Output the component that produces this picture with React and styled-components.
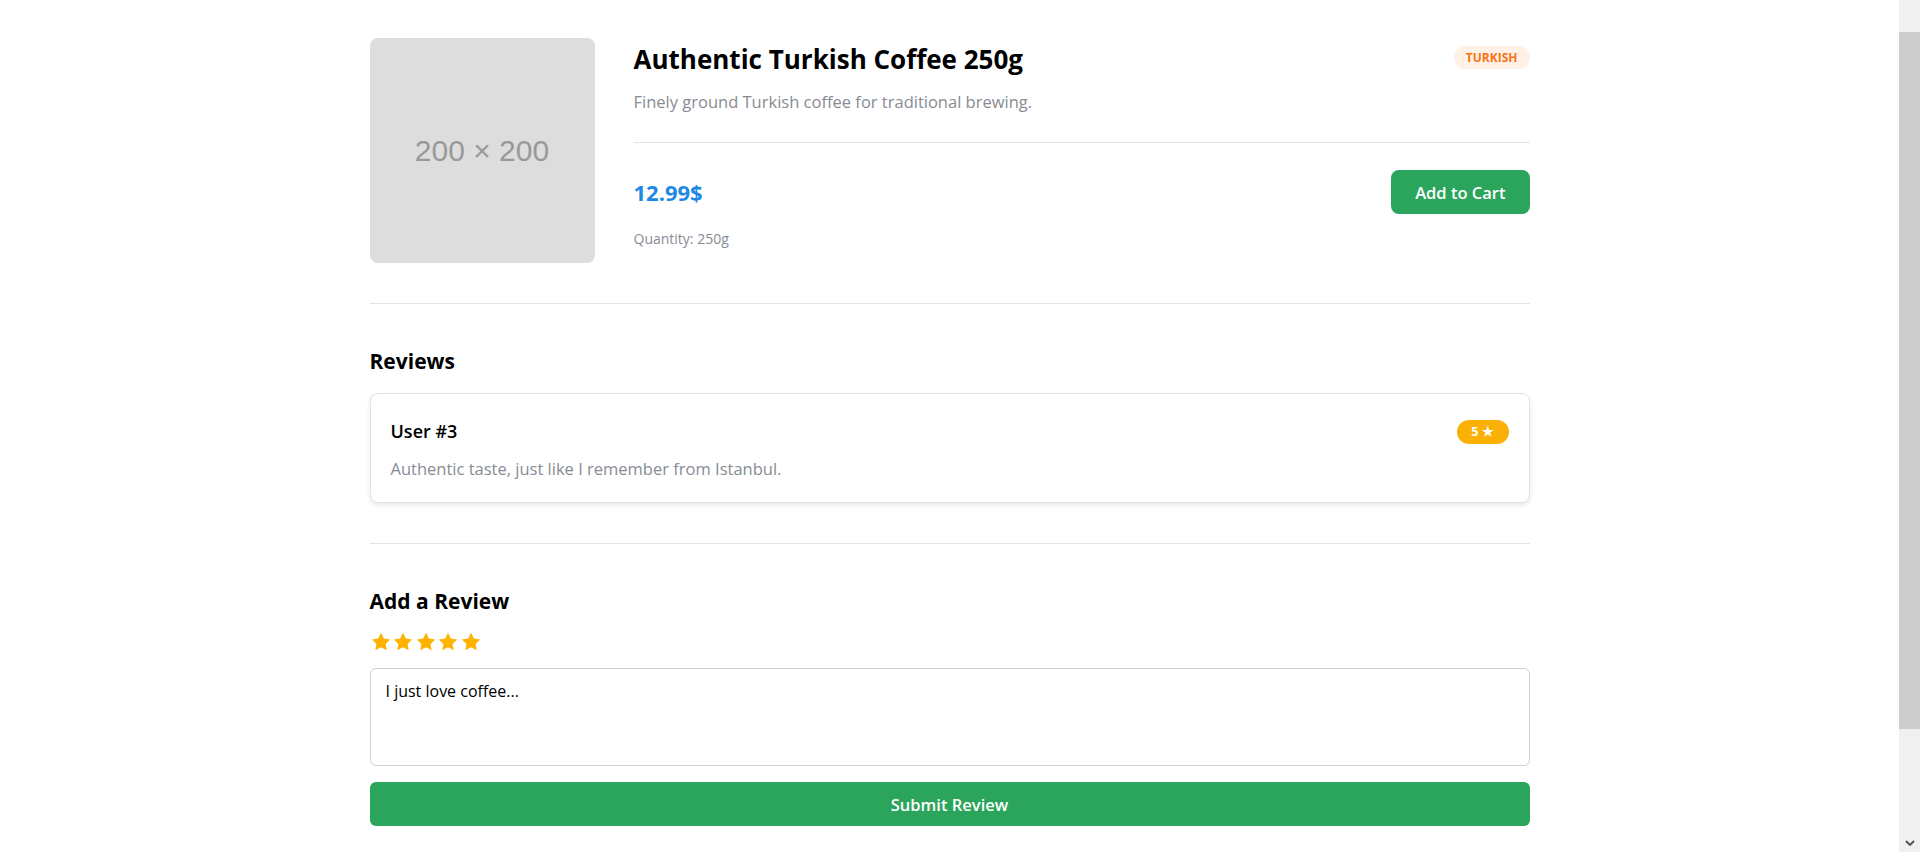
import React, { useState } from 'react';
import styled, { createGlobalStyle } from 'styled-components';

const GlobalStyle = createGlobalStyle`
  html, body {
    margin: 0;
    padding: 0;
    background: #fff;
  }
  body {
    font-family: "Open Sans", "Noto Sans", Arial, sans-serif;
    color: #111;
  }
  * {
    box-sizing: border-box;
  }
`;

const Shell = styled.div`
  display: flex;
  align-items: flex-start;
`;

const Main = styled.main`
  flex: 1;
  min-width: 0;
`;

// window scrollbar as it shows in the screenshot
const ScrollGutter = styled.aside`
  flex: 0 0 21px;
  height: 852px;
  background: #f0f0f0;
  display: flex;
  flex-direction: column;
  align-items: stretch;
  padding-top: 32px;
`;

const ScrollThumb = styled.div`
  height: 697px;
  background: #cdcdcd;
`;

const ScrollArrow = styled.div`
  flex: 1;
  display: flex;
  align-items: flex-end;
  justify-content: center;
  padding-bottom: 6px;
  color: #505050;
`;

const Page = styled.div`
  max-width: 1160px;
  margin: 0 auto;
  padding: 38px 0 137px;
`;

const ProductSection = styled.section`
  display: flex;
  gap: 39px;
`;

const ImagePlaceholder = styled.div`
  flex: 0 0 225px;
  height: 225px;
  border-radius: 8px;
  background: #dddddd;
  color: #999999;
  display: flex;
  align-items: center;
  justify-content: center;
  font-family: "Liberation Sans", Arial, sans-serif;
  font-size: 30px;
`;

const ProductInfo = styled.div`
  flex: 1;
  display: flex;
  flex-direction: column;
`;

const TitleRow = styled.div`
  display: flex;
  justify-content: space-between;
  align-items: flex-start;
`;

const Title = styled.h1`
  margin: 0;
  font-size: 26px;
  line-height: 42px;
  font-weight: 700;
  color: #000;
`;

const OriginBadge = styled.span`
  margin-top: 8px;
  padding: 0 12px;
  height: 23px;
  line-height: 23px;
  border-radius: 12px;
  background: #fff1e6;
  color: #f97316;
  font-size: 12px;
  font-weight: 700;
  text-transform: uppercase;
`;

const Description = styled.p`
  margin: 10px 0 0;
  font-size: 16.5px;
  line-height: 24px;
  color: #878c94;
`;

const Divider = styled.hr`
  border: none;
  border-top: 1px solid ${(p) => p.$color || '#e4e4e4'};
  margin: ${(p) => p.$margin || '40px 0 44px'};
`;

const PriceRow = styled.div`
  display: flex;
  justify-content: space-between;
  align-items: center;
`;

const Price = styled.span`
  font-size: 22px;
  font-weight: 700;
  color: #1e88e5;
`;

const GreenButton = styled.button`
  border: none;
  border-radius: ${(p) => (p.$block ? '6px' : '8px')};
  background: #2ba55c;
  color: #fff;
  font-family: inherit;
  font-size: 16.5px;
  font-weight: 600;
  height: 44px;
  padding: 0 24px;
  cursor: pointer;
  width: ${(p) => (p.$block ? '100%' : 'auto')};
  display: block;
  margin-top: ${(p) => p.$mt || 0};
`;

const Quantity = styled.span`
  margin-top: 15px;
  font-size: 14px;
  line-height: 20px;
  color: #878c94;
`;

const SectionTitle = styled.h2`
  margin: 0 0 ${(p) => p.$mb || '18px'};
  font-size: 21px;
  line-height: 27px;
  font-weight: 700;
  color: #000;
`;

const ReviewCard = styled.div`
  border: 1px solid #e2e2e6;
  border-radius: 8px;
  padding: 24px 20px 21px;
  box-shadow: 0 2px 4px rgba(0, 0, 0, 0.1);
`;

const ReviewHeader = styled.div`
  display: flex;
  justify-content: space-between;
  align-items: center;
  margin-bottom: 12px;
`;

const ReviewerName = styled.span`
  font-size: 18px;
  line-height: 27px;
  font-weight: 600;
  color: #000;
`;

const RatingBadge = styled.span`
  display: inline-flex;
  align-items: center;
  justify-content: center;
  width: 52px;
  height: 24px;
  border-radius: 12px;
  background: #fab005;
  color: #fff;
  font-size: 12.5px;
  font-weight: 700;
`;

const ReviewText = styled.p`
  margin: 0;
  font-size: 16.5px;
  line-height: 24px;
  color: #878c94;
`;

const StarRow = styled.div`
  display: flex;
  margin-bottom: 15px;
`;

const StarButton = styled.button`
  border: none;
  background: none;
  padding: 0;
  width: 22.5px;
  height: 22px;
  cursor: pointer;
  color: ${(p) => (p.$active ? '#ffb300' : '#d0d0d0')};
  svg {
    display: block;
  }
`;

const ReviewInput = styled.textarea`
  display: block;
  width: 100%;
  height: 98px;
  resize: none;
  border: 1px solid #cfcfd4;
  border-radius: 6px;
  padding: 10px 15px;
  font-family: inherit;
  font-size: 16px;
  line-height: 24px;
  color: #000;
  outline: none;
`;

const Star = () => (
  <svg width="22" height="22" viewBox="0 0 24 24" fill="currentColor">
    <path d="M12 2l3.09 6.26L22 9.27l-5 4.87 1.18 6.88L12 17.77l-6.18 3.25L7 14.14 2 9.27l6.91-1.01L12 2z" />
  </svg>
);

const product = {
  title: 'Authentic Turkish Coffee 250g',
  origin: 'Turkish',
  description: 'Finely ground Turkish coffee for traditional brewing.',
  price: '12.99$',
  quantity: '250g',
};

const reviews = [
  { id: 3, user: 'User #3', rating: 5, text: 'Authentic taste, just like I remember from Istanbul.' },
];

const App = () => {
  const [rating, setRating] = useState(5);
  const [text, setText] = useState('I just love coffee...');

  return (
    <>
      <GlobalStyle />
      <Shell>
        <Main>
          <Page>
            <ProductSection>
              <ImagePlaceholder>200 × 200</ImagePlaceholder>
              <ProductInfo>
                <TitleRow>
                  <Title>{product.title}</Title>
                  <OriginBadge>{product.origin}</OriginBadge>
                </TitleRow>
                <Description>{product.description}</Description>
                <Divider $margin="28px 0 27px" $color="#e2e4ea" />
                <PriceRow>
                  <Price>{product.price}</Price>
                  <GreenButton>Add to Cart</GreenButton>
                </PriceRow>
                <Quantity>Quantity: {product.quantity}</Quantity>
              </ProductInfo>
            </ProductSection>

            <Divider />

            <SectionTitle>Reviews</SectionTitle>
            {reviews.map((r) => (
              <ReviewCard key={r.id}>
                <ReviewHeader>
                  <ReviewerName>{r.user}</ReviewerName>
                  <RatingBadge>{r.rating} ★</RatingBadge>
                </ReviewHeader>
                <ReviewText>{r.text}</ReviewText>
              </ReviewCard>
            ))}

            <Divider />

            <SectionTitle $mb="16px">Add a Review</SectionTitle>
            <StarRow>
              {[1, 2, 3, 4, 5].map((n) => (
                <StarButton key={n} $active={n <= rating} onClick={() => setRating(n)}>
                  <Star />
                </StarButton>
              ))}
            </StarRow>
            <ReviewInput value={text} onChange={(e) => setText(e.target.value)} />
            <GreenButton $block $mt="16px">Submit Review</GreenButton>
          </Page>
        </Main>
        <ScrollGutter>
          <ScrollThumb />
          <ScrollArrow>
            <svg width="10" height="6" viewBox="0 0 10 6" fill="none">
              <path d="M1 1l4 4 4-4" stroke="currentColor" strokeWidth="1.8" />
            </svg>
          </ScrollArrow>
        </ScrollGutter>
      </Shell>
    </>
  );
};

export default App;
